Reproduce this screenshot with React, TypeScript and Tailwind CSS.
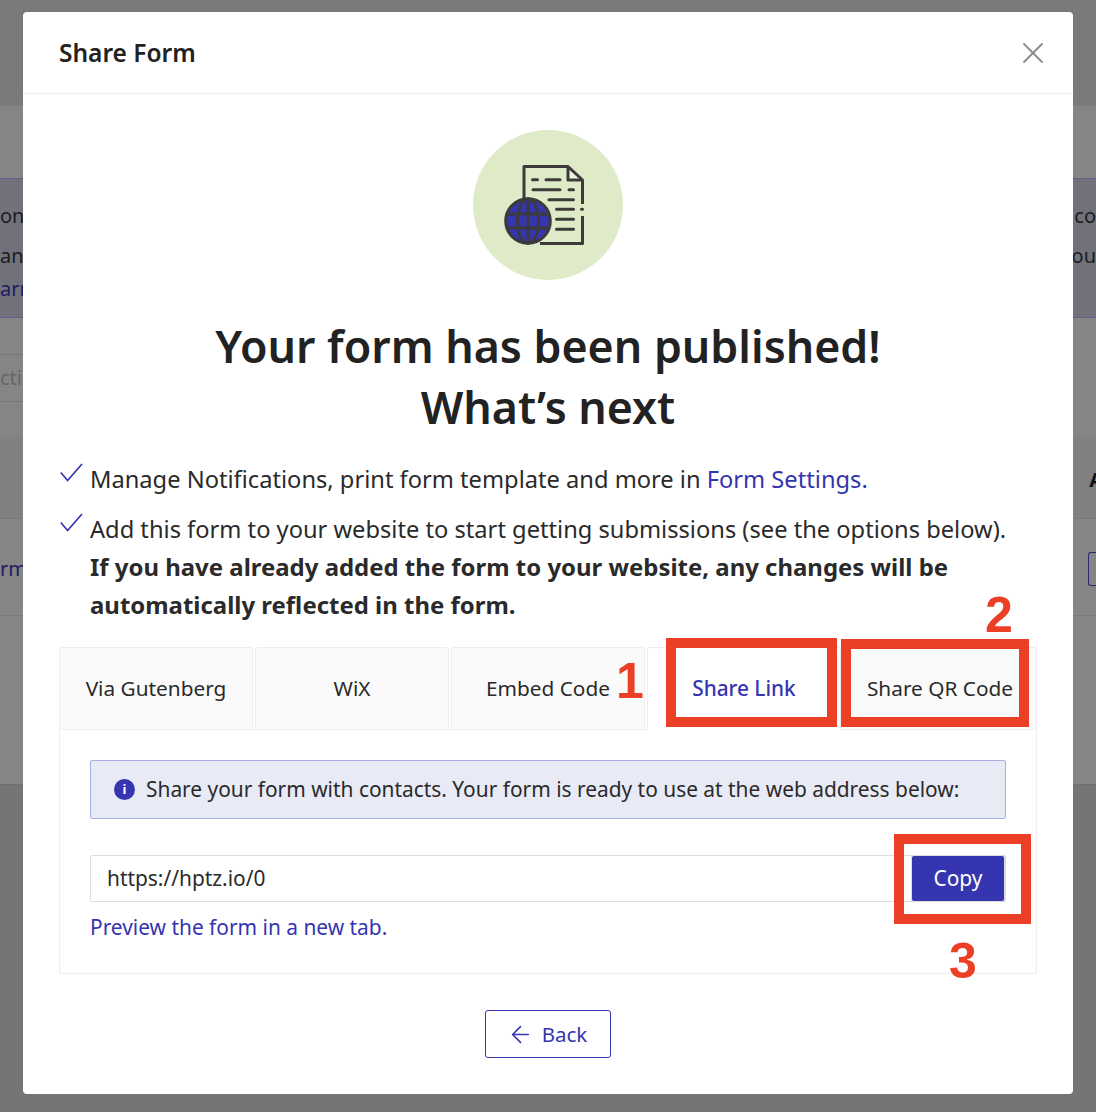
import React from "react";
import { X, ArrowLeft } from "lucide-react";

const Check = () => (
  <svg width="24" height="20" viewBox="0 0 24 20" fill="none" stroke="#3535b0" strokeWidth="1.7" className="shrink-0 mt-[2px]">
    <path d="M1.8 9.5 L8.6 17.5 L23 1" />
  </svg>
);

const DocIcon = () => (
  <svg width="80" height="80" viewBox="0 0 80 80" fill="none">
    <path d="M64 1.5L78.5 15H64Z" fill="#eef3e0" />
    <path d="M20 34V1.5H64L78.5 15V39M78.5 51V78.5H36" stroke="#3d3a3a" strokeWidth="3" strokeLinejoin="round" />
    <path d="M64 1.5V15H78.5" stroke="#3d3a3a" strokeWidth="3" strokeLinejoin="round" />
    <path
      d="M28.5 14.7h5M42 14.7h14M29 24.7h27M65 24.7h4.5M45 34.7h24.5M52.5 44.3h17M52.5 54.3h17M52.5 64.3h17M77.5 44.3h1"
      stroke="#3d3a3a"
      strokeWidth="3"
      strokeLinecap="round"
    />
    <circle cx="24" cy="56" r="22.3" fill="#3535b0" stroke="#3d3a3a" strokeWidth="3" />
    <ellipse cx="24" cy="56" rx="10.5" ry="22.3" stroke="#3d3a3a" strokeWidth="2.8" />
    <path d="M24 34V78M3.5 49H44.5M3.5 63H44.5" stroke="#3d3a3a" strokeWidth="2.8" />
  </svg>
);

const Tab = ({ label, active }: { label: string; active?: boolean }) => (
  <div
    className={`w-[194px] h-[83px] flex items-center justify-center rounded-t-[3px] border border-[#eeeeee] ${
      active
        ? "bg-white border-b-white text-[#3535b0] z-10 text-[20.8px] font-medium"
        : "bg-[#fafafa] text-[#2a2a2a] text-[20.8px]"
    }`}
  >
    {label}
  </div>
);

export default function App() {
  return (
    <div className="relative w-[1096px] h-[1112px] overflow-hidden bg-[#757575] font-['Noto_Sans','Open_Sans',sans-serif] text-[#222222]">
      {/* dimmed page behind the dialog */}
      <div className="flex flex-col text-[20px]">
        <div className="h-[106px] bg-[#7a7a7a]" />
        <div className="h-[72px] bg-[#858585]" />
        <div className="h-[140px] bg-[#70717a] border-y border-[#62628c] flex justify-between text-[#1c1c1c] leading-[40px] pt-[17px]">
          <div className="flex flex-col">
            <span>on</span>
            <span>an</span>
            <span className="text-[#1c1c66] leading-[26px]">arr</span>
          </div>
          <div className="flex flex-col items-end">
            <span>co</span>
            <span>ou</span>
          </div>
        </div>
        <div className="h-[119px] bg-[#858585] pt-[36px]">
          <div className="h-[48px] w-[40px] border-y border-[#767676] text-[#666666] flex items-center">cti</div>
        </div>
        <div className="h-[81px] bg-[#808080] flex items-center justify-end font-bold text-[#111111] pt-[4px] mr-[-7px]">A</div>
        <div className="h-[98px] bg-[#858585] border-y border-[#7a7a7a] flex items-center justify-between text-[#1c1c66] pt-[3px]">
          <span>rm</span>
          <span className="w-[8px] h-[34px] border border-r-0 border-[#2a2a70] rounded-l-[3px]" />
        </div>
        <div className="h-[169px] bg-[#858585] border-b border-[#6f6f6f]" />
      </div>

      {/* dialog */}
      <div className="absolute inset-0 flex justify-center items-start pt-[12px]">
        <div className="w-[1050px] h-[1082px] bg-white rounded-[4px] flex flex-col">
          <div className="h-[82px] shrink-0 border-b border-[#eeeeee] flex items-center justify-between pl-[36px] pr-[22px]">
            <h2 className="text-[24.5px] font-semibold text-[#222222] pt-[2px]">Share Form</h2>
            <X size={36} strokeWidth={1.2} className="text-[#8a8a8a]" />
          </div>

          <div className="flex flex-col items-center pt-[36px] px-[36px]">
            <div className="w-[150px] h-[150px] rounded-full bg-[#dfeac8] flex items-center justify-center pr-[9px]">
              <DocIcon />
            </div>
            <h1 className="mt-[35px] text-[44.7px] leading-[61px] font-semibold text-center text-[#222222]">
              Your form has been published!
              <br />
              What’s next
            </h1>

            <div className="w-full mt-[24px] text-[23.67px] leading-[37.5px] text-[#2a2a2a]">
              <div className="flex items-start gap-[7px]">
                <Check />
                <p>
                  Manage Notifications, print form template and more in{" "}
                  <span className="text-[#3535b0]">Form Settings.</span>
                </p>
              </div>
              <div className="flex items-start gap-[7px] mt-[12px]">
                <Check />
                <div>
                  <p>Add this form to your website to start getting submissions (see the options below).</p>
                  <p className="font-bold text-[23.95px] leading-[37.5px]">
                    If you have already added the form to your website, any changes will be automatically reflected in
                    the form.
                  </p>
                </div>
              </div>
            </div>

            <div className="w-full mt-[24px] flex gap-[2px] relative">
              <Tab label="Via Gutenberg" />
              <Tab label="WiX" />
              <Tab label="Embed Code" />
              <Tab label="Share Link" active />
              <Tab label="Share QR Code" />
              <span className="absolute z-20 left-[557px] top-[16px] text-[50px] leading-[36px] font-bold text-[#ec4026] font-['Liberation_Sans',sans-serif]">1</span>
              <span className="absolute z-20 left-[926px] top-[-50px] text-[50px] leading-[36px] font-bold text-[#ec4026] font-['Liberation_Sans',sans-serif]">2</span>
              <span className="absolute z-20 left-[607px] top-[-9px] w-[171px] h-[89px] border-[10px] border-[#ec4026]" />
              <span className="absolute z-20 left-[782px] top-[-8px] w-[188px] h-[88px] border-[10px] border-[#ec4026]" />
            </div>

            <div className="w-full h-[245px] mt-[-1px] border border-[#eeeeee] px-[30px] pt-[30px] relative">
              <div className="h-[59px] bg-[#e8eaf6] border border-[#a6afe0] rounded-[2px] flex items-center pl-[23px] gap-[11px] text-[20.9px] text-[#2a2a2a]">
                <span className="w-[21px] h-[21px] rounded-full bg-[#3535b0] text-white flex items-center justify-center text-[13px] font-bold">i</span>
                Share your form with contacts. Your form is ready to use at the web address below:
              </div>
              <div className="mt-[36px] h-[47px] flex items-center justify-between border border-[#dddddd] rounded-[2px] pl-[16px] text-[20.9px] text-[#2a2a2a] relative">
                https://hptz.io/0
                <button className="h-[47px] w-[94px] bg-[#3535b0] text-white rounded-[3px] text-[20.9px] border border-[#dddddd]">Copy</button>
              </div>
              <p className="mt-[10px] text-[20.9px] text-[#3535b0]">Preview the form in a new tab.</p>
              <span className="absolute left-[834px] top-[104px] w-[137px] h-[90px] border-[10px] border-[#ec4026]" />
              <span className="absolute left-[889px] top-[213px] text-[50px] leading-[36px] font-bold text-[#ec4026] font-['Liberation_Sans',sans-serif]">3</span>
            </div>

            <button className="mt-[36px] w-[126px] h-[48px] border border-[#3535b0] rounded-[3px] flex items-center justify-center gap-[8px] text-[20.5px] text-[#3535b0] pr-[2px]">
              <ArrowLeft size={27} strokeWidth={1.4} />
              Back
            </button>
          </div>
        </div>
      </div>
    </div>
  );
}
